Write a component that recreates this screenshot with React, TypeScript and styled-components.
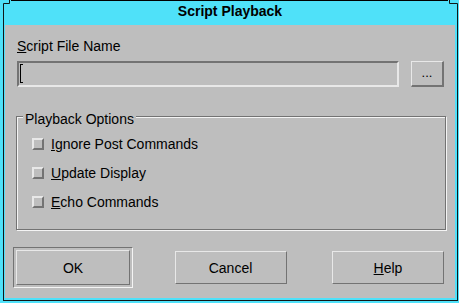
import React from "react";
import styled, { createGlobalStyle } from "styled-components";

const C = {
  bg: "#bebebe",
  light: "#e8e8e8",
  white: "#f4f4f4",
  dark: "#737373",
  cyan: "#4fe1f9",
  line: "#101818",
  text: "#000000",
};

const GlobalStyle = createGlobalStyle`
  html, body { margin: 0; padding: 0; background: ${C.cyan}; }
  body { font-family: "Liberation Sans", Arial, sans-serif; }
  * { box-sizing: border-box; }
`;

const Window = styled.div`
  position: relative;
  width: 459px;
  height: 303px;
  padding: 0 1px 2px 3px;
  background: ${C.cyan};
  display: flex;
`;

const Frame = styled.div`
  flex: 1;
  display: flex;
  flex-direction: column;
  border-top: 1px solid #000;
  border-left: 1px solid ${C.line};
  border-right: 1px solid ${C.line};
  border-bottom: 1px solid ${C.line};
  padding: 0 2px 2px 1px;
`;

const TitleBar = styled.div`
  height: 24px;
  padding-top: 2px;
  text-align: center;
  font: bold 14px/16px "Liberation Sans", Arial, sans-serif;
  color: ${C.text};
`;

const Content = styled.div`
  height: 273px;
  background: ${C.bg};
  padding: 13px 0 10px;
  display: flex;
  flex-direction: column;
  font: 14px/16px "Liberation Sans", Arial, sans-serif;
  color: ${C.text};
`;

const FieldLabel = styled.div`
  height: 16px;
  margin-left: 12px;
`;

const FileRow = styled.div`
  display: flex;
  gap: 12px;
  height: 26px;
  margin: 7px 0 0 12px;
`;

const TextField = styled.div`
  width: 382px;
  height: 26px;
  border: 2px solid;
  border-color: ${C.dark} ${C.light} ${C.light} ${C.dark};
  padding: 0 0 0 0;
  position: relative;
`;

const Cursor = styled.span`
  position: absolute;
  left: 0;
  top: 0;
  width: 3px;
  height: 19px;
  border: 1px solid #000;
  border-right: none;
`;

const SmallButton = styled.div`
  width: 33px;
  height: 26px;
  border: 1px solid;
  border-width: 1px 2px 2px 1px;
  border-color: ${C.light} ${C.dark} ${C.dark} ${C.light};
  display: flex;
  align-items: center;
  justify-content: center;
  font-size: 13px;
  padding-bottom: 1px;
`;

const Group = styled.div`
  position: relative;
  width: 430px;
  height: 114px;
  margin: 29px 0 0 11px;
  border: 1px solid ${C.dark};
  box-shadow: 1px 1px 0 ${C.white}, inset 1px 1px 0 ${C.white};
  padding: 19px 0 0 15px;
`;

const Legend = styled.span`
  position: absolute;
  top: -6px;
  left: 6px;
  padding: 0 2px;
  background: ${C.bg};
  line-height: 16px;
`;

const OptionList = styled.div`
  display: flex;
  flex-direction: column;
  gap: 13px;
`;

const Option = styled.div`
  display: flex;
  align-items: center;
  gap: 7px;
  height: 16px;
`;

const CheckBox = styled.span`
  width: 12px;
  height: 12px;
  border: 2px solid;
  border-color: ${C.light} ${C.dark} ${C.dark} ${C.light};
`;

const ButtonRow = styled.div`
  display: flex;
  justify-content: space-between;
  margin-top: 17px;
  padding: 0 7px 0 8px;
`;

const ButtonSlot = styled.div<{ $default?: boolean }>`
  width: 120px;
  height: 41px;
  display: flex;
  align-items: center;
  justify-content: center;
  border: 1px solid;
  border-color: ${(p) =>
    p.$default ? `${C.dark} ${C.white} ${C.white} ${C.dark}` : "transparent"};
`;

const PushButton = styled.div<{ $default?: boolean }>`
  width: ${(p) => (p.$default ? 114 : 112)}px;
  height: ${(p) => (p.$default ? 35 : 33)}px;
  border: 1px solid;
  border-color: ${C.light} ${C.dark} ${C.dark} ${C.light};
  display: flex;
  align-items: center;
  justify-content: center;
`;

const Corner = styled.svg<{ $pos: "tl" | "tr" }>`
  position: absolute;
  top: 0;
  ${(p) => (p.$pos === "tl" ? "left: 0;" : "right: 0;")}
`;

function Mn({ c, rest }: { c: string; rest: string }) {
  return (
    <>
      <u>{c}</u>
      {rest}
    </>
  );
}

export default function App() {
  return (
    <>
      <GlobalStyle />
      <Window>
        <Frame>
          <TitleBar>Script Playback</TitleBar>
          <Content>
            <FieldLabel>
              <Mn c="S" rest="cript File Name" />
            </FieldLabel>
            <FileRow>
              <TextField>
                <Cursor style={{ left: 1, top: 1 }} />
              </TextField>
              <SmallButton>...</SmallButton>
            </FileRow>
            <Group>
              <Legend>Playback Options</Legend>
              <OptionList>
                <Option>
                  <CheckBox />
                  <span>
                    <Mn c="I" rest="gnore Post Commands" />
                  </span>
                </Option>
                <Option>
                  <CheckBox />
                  <span>
                    <Mn c="U" rest="pdate Display" />
                  </span>
                </Option>
                <Option>
                  <CheckBox />
                  <span>
                    <Mn c="E" rest="cho Commands" />
                  </span>
                </Option>
              </OptionList>
            </Group>
            <ButtonRow>
              <ButtonSlot $default>
                <PushButton $default>OK</PushButton>
              </ButtonSlot>
              <ButtonSlot>
                <PushButton>Cancel</PushButton>
              </ButtonSlot>
              <ButtonSlot>
                <PushButton>
                  <Mn c="H" rest="elp" />
                </PushButton>
              </ButtonSlot>
            </ButtonRow>
          </Content>
        </Frame>
        <Corner $pos="tl" width="12" height="5" viewBox="0 0 12 5">
          <rect x="0" y="0" width="11" height="4" fill={C.cyan} />
          <polyline points="3.5,5 3.5,3.5 9.5,3.5 9.5,0" fill="none" stroke={C.line} strokeWidth="1" />
        </Corner>
        <Corner $pos="tr" width="12" height="5" viewBox="0 0 12 5">
          <rect x="1" y="0" width="11" height="4" fill={C.cyan} />
          <polyline points="10.5,5 10.5,3.5 2.5,3.5 2.5,0" fill="none" stroke={C.line} strokeWidth="1" />
        </Corner>
      </Window>
    </>
  );
}
